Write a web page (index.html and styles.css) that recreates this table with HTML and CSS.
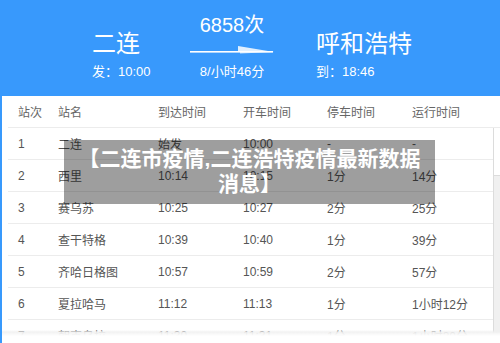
FILE: index.html
```html
<!DOCTYPE html>
<html lang="zh">
<head>
<meta charset="utf-8">
<link rel="stylesheet" href="styles.css">
</head>
<body>
<div class="page">
  <header class="hero">
    <div class="station">
      <div class="city">二连</div>
      <div class="time">发：10:00</div>
    </div>
    <div class="trip">
      <div class="train">6858次</div>
      <svg class="arrow" width="84" height="10" viewBox="0 0 84 10">
        <rect x="0" y="5" width="83" height="1.6" fill="#fff"/>
        <polygon points="48,0 84,6 48,6" fill="#fff" opacity="0.85"/>
        <polygon points="50,6 84,6 50,7.6" fill="#fff" opacity="0.7"/>
      </svg>
      <div class="time">8/小时46分</div>
    </div>
    <div class="station">
      <div class="city">呼和浩特</div>
      <div class="time">到：18:46</div>
    </div>
  </header>
  <section class="panel">
    <div class="row head">
      <span>站次</span><span>站名</span><span>到达时间</span><span>开车时间</span><span>停车时间</span><span>运行时间</span>
    </div>
    <div class="body">
      <div class="rows">
        <div class="row"><span>1</span><span>二连</span><span>始发</span><span>10:00</span><span>-</span><span>-</span></div>
        <div class="row"><span>2</span><span>西里</span><span>10:14</span><span>10:15</span><span>1分</span><span>14分</span></div>
        <div class="row"><span>3</span><span>赛乌苏</span><span>10:25</span><span>10:27</span><span>2分</span><span>25分</span></div>
        <div class="row"><span>4</span><span>查干特格</span><span>10:39</span><span>10:40</span><span>1分</span><span>39分</span></div>
        <div class="row"><span>5</span><span>齐哈日格图</span><span>10:57</span><span>10:59</span><span>2分</span><span>57分</span></div>
        <div class="row"><span>6</span><span>夏拉哈马</span><span>11:12</span><span>11:13</span><span>1分</span><span>1小时12分</span></div>
        <div class="row"><span>7</span><span>朝克乌拉</span><span>11:30</span><span>11:31</span><span>1分</span><span>1小时30分</span></div>
      </div>
      <div class="scrollbar"><div class="thumb"></div></div>
    </div>
    <div class="fade"></div>
    <div class="caption">【二连市疫情,二连浩特疫情最新数据消息】</div>
  </section>
</div>
</body>
</html>
```

FILE: styles.css
```css
html, body {
  margin: 0;
  padding: 0;
}
body {
  width: 500px;
  height: 343px;
  overflow: hidden;
  background: #3899fc;
  font-family: "Liberation Sans", "Noto Sans CJK SC", sans-serif;
}
.page {
  display: flex;
  flex-direction: column;
  height: 343px;
}
.hero {
  height: 96px;
  flex: none;
  display: flex;
  align-items: flex-start;
  padding-left: 92px;
  color: #fff;
  box-sizing: border-box;
}
.station {
  padding-top: 29px;
  display: flex;
  flex-direction: column;
  gap: 4px;
}
.station:first-child {
  width: 98px;
}
.city {
  font-size: 24px;
  line-height: 30px;
}
.time {
  font-size: 13px;
  line-height: 18px;
}
.trip {
  width: 84px;
  margin-right: 42px;
  padding-top: 12px;
  display: flex;
  flex-direction: column;
  align-items: center;
}
.train {
  font-size: 20px;
  line-height: 26px;
}
.arrow {
  display: block;
  margin-top: 8px;
}
.trip .time {
  margin-top: 7px;
}
.panel {
  position: relative;
  flex: 1;
  margin-left: 2px;
  background: #fff;
  padding-left: 6px;
  overflow: hidden;
}
.row {
  display: grid;
  grid-template-columns: 40px 100px 85px 84px 85px 1fr;
  padding-left: 10px;
  height: 32px;
  align-items: center;
  font-size: 12px;
  color: #555;
  border-bottom: 1px solid #ececec;
  box-sizing: border-box;
  white-space: nowrap;
}
.row.head {
  height: 32px;
  color: #666;
}
.body {
  display: flex;
}
.rows {
  flex: 1;
}
.scrollbar {
  width: 6px;
  border-left: 1px solid #dcdcdc;
  background: #f0f0f0;
  height: 205px;
}
.thumb {
  height: 47px;
  background: #fff;
  border-bottom: 1px solid #dcdcdc;
}
.fade {
  position: absolute;
  left: 0;
  right: 0;
  top: 234px;
  bottom: 0;
  background: linear-gradient(to bottom, rgba(255,255,255,0) 0, rgba(240,240,240,0.9) 2px, #fff 6px);
}
.caption {
  position: absolute;
  left: 62px;
  top: 44px;
  width: 371px;
  box-sizing: border-box;
  padding: 6px 10px 8px;
  background: rgba(0, 0, 0, 0.38);
  color: #fff;
  font-weight: bold;
  font-size: 21px;
  line-height: 25px;
  text-align: center;
}
```
